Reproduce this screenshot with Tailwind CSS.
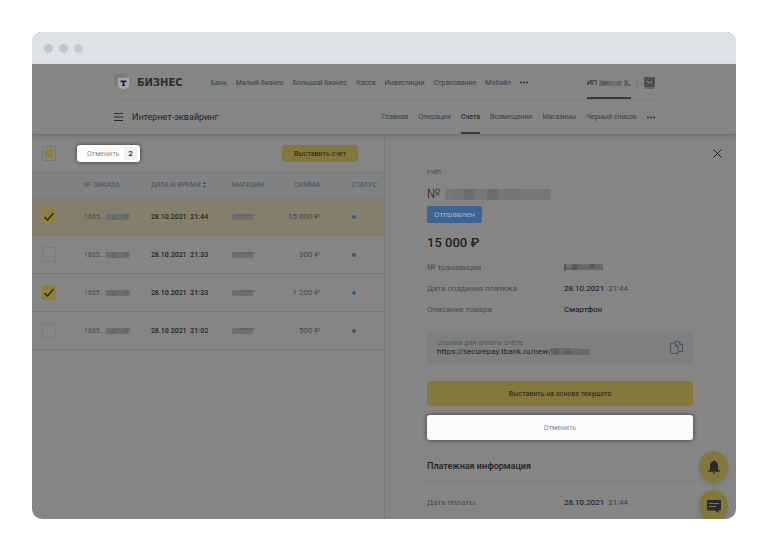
<!DOCTYPE html>
<html lang="ru">
<head>
  <meta charset="UTF-8" />
  <meta name="viewport" content="width=device-width, initial-scale=1" />
  <title>Интернет-эквайринг</title>
  <script src="https://cdn.jsdelivr.net/npm/@tailwindcss/browser@4"></script>
</head>
<body class="bg-white p-8 font-['Roboto','Liberation_Sans',sans-serif] text-[8px] leading-[12px] text-[#222]">
  <div class="relative overflow-hidden rounded-[10px] bg-[#858585]">

    <!-- browser bar -->
    <div class="flex h-8 items-center gap-[6px] bg-[#dee1e6] pl-3">
      <span class="size-[9px] rounded-full bg-[#c5c8d4]"></span>
      <span class="size-[9px] rounded-full bg-[#c5c8d4]"></span>
      <span class="size-[9px] rounded-full bg-[#c5c8d4]"></span>
    </div>

    <header class="border-b border-[#727272] pr-[81px] pl-[82px] shadow-[0_2px_5px_rgba(0,0,0,0.12)]">
      <div class="flex h-9 items-center border-b border-[#7d7d7d] pt-[2px]">
        <a href="#" class="flex items-center gap-1">
          <svg class="h-5 w-[19px]" viewBox="0 0 19 20">
            <rect width="19" height="20" rx="4" fill="#8a857a" />
            <path d="M4 0h11L0 15V4a4 4 0 0 1 4-4Z" fill="#827d74" />
            <path d="M4 5h11v6c0 3-2 4-5.500 5.500C6 15 4 14 4 11Z" fill="#a3a9b2" />
            <path d="M6.500 7.500h6v2h-1v-.5h-1v3h.5v1H8v-1h.5V9h-1v.5h-1Z" fill="#1f2126" />
          </svg>
          <span class="font-['DejaVu_Sans',sans-serif] text-[10px] font-bold text-[#2e2e2e]">БИЗНЕС</span>
        </a>
        <nav class="ml-7 flex items-center gap-[9px] text-[7px] text-[#3f3f3f]">
          <a href="#">Банк</a>
          <a href="#">Малый бизнес</a>
          <a href="#">Большой бизнес</a>
          <a href="#">Касса</a>
          <a href="#">Инвестиции</a>
          <a href="#">Страхование</a>
          <a href="#">Мобайл</a>
          <button type="button" aria-label="Ещё">
            <svg class="h-[3px] w-2" viewBox="0 0 8 3" fill="#2e2e2e"><circle cx="1" cy="1.500" r=".9" /><circle cx="4" cy="1.500" r=".9" /><circle cx="7" cy="1.500" r=".9" /></svg>
          </button>
        </nav>
        <div class="ml-auto flex h-full items-center">
          <a href="#" class="flex h-full items-center gap-[2px] border-y-2 border-t-transparent border-b-[#3a3a3a] text-[7px]">
            ИП
            <svg class="h-[6px] w-8" viewBox="0 0 34 6"><path d="M0 0h4v1h20v5H0Z" fill="#686868" /><path d="M4 1h5v4H4Z" fill="#5c5c5c" /><path d="M14 1h5v4h-5Z" fill="#727272" /><path d="M27 0h4v4h3v2h-7Z" fill="#5f5f5f" /></svg>
          </a>
          <span class="ml-[6px] h-3 w-px bg-[#797979]"></span>
          <button type="button" aria-label="Профиль" class="ml-[6px]">
            <svg class="h-3 w-[11px]" viewBox="0 0 11 12"><rect x="1" y="1" width="9" height="11" rx="1" fill="#63666a" /><rect width="11" height="10" rx="1" fill="#4c5055" /><path d="m3 4 2.500 2.500L8 4" fill="none" stroke="#9b9b9b" /></svg>
          </button>
        </div>
      </div>

      <div class="flex h-[34px] items-center">
        <button type="button" aria-label="Меню">
          <svg class="h-2 w-[9px]" viewBox="0 0 9 8" stroke="#2a2a2a"><path d="M0 .5h9M0 4h9M0 7.500h9" /></svg>
        </button>
        <h1 class="ml-[9px] text-[9px]">Интернет-эквайринг</h1>
        <nav class="ml-auto flex h-full items-center gap-[10px] text-[7px] text-[#3f3f3f]">
          <a href="#">Главная</a>
          <a href="#">Операции</a>
          <a href="#" class="flex h-full items-center border-y-2 border-t-transparent border-b-[#3a3a3a] text-[#111]">Счета</a>
          <a href="#">Возмещения</a>
          <a href="#">Магазины</a>
          <a href="#">Черный список</a>
          <button type="button" aria-label="Ещё">
            <svg class="h-[3px] w-2" viewBox="0 0 8 3" fill="#2e2e2e"><circle cx="1" cy="1.500" r=".9" /><circle cx="4" cy="1.500" r=".9" /><circle cx="7" cy="1.500" r=".9" /></svg>
          </button>
        </nav>
      </div>
    </header>

    <main class="grid grid-cols-2">
      <!-- invoices -->
      <section>
        <div class="flex h-[37px] items-center pr-[26px] pl-[10px]">
          <label class="relative block h-[15px] w-[14px]">
            <input type="checkbox" aria-label="Выбрать все" class="block h-full w-full appearance-none rounded-[2px] border border-[#747679]" />
            <span class="pointer-events-none absolute inset-[3px] bg-[#8f7f38]"></span>
          </label>
          <button type="button" class="ml-[21px] flex h-[17px] items-center gap-[5px] rounded-[3px] bg-white pr-[3px] pl-[10px] text-[7px] text-[#85888c] shadow-[0_0_4px_rgba(0,0,0,0.6)]">
            Отменить
            <span class="h-[13px] rounded-[2px] bg-[#eff0f3] px-1 text-[8px] leading-[13px] font-medium text-[#222]">2</span>
          </button>
          <button type="button" class="ml-auto h-[17px] rounded-[3px] bg-[#84773c] px-3 text-[7px]">Выставить счет</button>
        </div>

        <table class="w-full table-fixed text-left">
          <thead>
            <tr class="h-[25px] border-y border-[#797979] bg-[#808182] text-[7px] text-[#4d525c]">
              <th class="w-[52px]"></th>
              <th class="w-[19%] font-normal">№ ЗАКАЗА</th>
              <th class="w-[23%] font-normal whitespace-nowrap">ДАТА И ВРЕМЯ<svg class="ml-[2px] inline h-[6px] w-[3px]" viewBox="0 0 3 6" fill="#3c4452"><path d="M0 2 1.500 0 3 2ZM0 4l1.500 2L3 4Z" /></svg></th>
              <th class="w-[12%] font-normal">МАГАЗИН</th>
              <th class="w-[13%] text-right font-normal">СУММА</th>
              <th class="pr-[7px] text-right font-normal">СТАТУС</th>
            </tr>
          </thead>
          <tbody id="invoices"></tbody>
        </table>
      </section>

      <!-- invoice card -->
      <section class="relative border-l border-[#787878] pr-[43px] pb-[6px] pl-[42px]">
        <button type="button" aria-label="Закрыть" class="absolute top-[14px] right-[14px]">
          <svg class="size-[9px]" viewBox="0 0 9 9" stroke="#222"><path d="m.5.5 8 8m0-8-8 8" /></svg>
        </button>

        <p class="mt-[31px] text-[7px] text-[#4a4a4a]">счёт</p>
        <h2 class="mt-2 flex h-4 items-center gap-[5px] text-[13px] font-light">№
          <svg class="h-[11px] w-[106px]" viewBox="0 0 106 11"><path d="M0 0h106v11H0Z" fill="#767777" /><path d="M8 0h11v11H8Zm52 0h14v11H60Z" fill="#727373" /><path d="M19 0h11v11H19Zm23 0h11v11H42Z" fill="#6c6f6e" /></svg>
        </h2>
        <span class="mt-1 inline-block h-[17px] rounded-[2px] bg-[#3b6492] px-[7px] leading-[17px] text-[#a9b5c2]">Отправлен</span>
        <p class="mt-[10px] text-[13px] leading-5 font-medium">15 000 ₽</p>

        <dl class="mt-1 grid grid-cols-[137px_1fr] leading-[21px]">
          <dt class="text-[#4a4b4e]">№ транзакции</dt>
          <dd class="flex items-center"><svg class="h-[7px] w-[39px]" viewBox="0 0 39 7"><path d="M0 0h39v6H0Z" fill="#666768" /><path d="M0 0h2v7H0Zm8 1h5v5H8Zm18-1h5v4h-5Z" fill="#545658" /><path d="M2 0h6v3H2Zm16 0h5v2h-5Z" fill="#707070" /></svg></dd>
          <dt class="text-[#4a4b4e]">Дата создания платежа</dt>
          <dd class="text-[#111]">28.10.2021 <span class="ml-[2px] text-[#444]">21:44</span></dd>
          <dt class="text-[#4a4b4e]">Описание товара</dt>
          <dd class="text-[#111]">Смартфон</dd>
        </dl>

        <div class="mt-[11px] flex h-[33px] items-center justify-between rounded-[3px] bg-[#7f7f7f] px-[10px]">
          <div>
            <p class="text-[7px] leading-[7px] text-[#555]">Ссылка для оплаты счёта</p>
            <p class="flex items-center leading-[9px]"><a href="#">https://securepay.tbank.ru/new/</a><svg class="h-[7px] w-[38px]" viewBox="0 0 38 7"><path d="M0 0h28v1h10v6H0Z" fill="#68696b" /><path d="M2 1h5v5H2Zm12 1h6v4h-6Z" fill="#5c5f62" /><path d="M20 0h8v3h-8Z" fill="#707173" /></svg></p>
          </div>
          <button type="button" aria-label="Скопировать">
            <svg class="h-[13px] w-[13px]" viewBox="0 0 13 13" fill="none" stroke="#3f5267" stroke-width=".9"><path d="M5 2V.5h4.500l3 3V10.500H8.500M9.500.5v3h3" /><path d="M.5 2h4.500l3 3v7.500H.5ZM5 2v3h3" /></svg>
          </button>
        </div>

        <button type="button" class="mt-[17px] block h-[25px] w-full rounded-[3px] bg-[#84773c] text-[7px]">Выставить на основе текущего</button>
        <button type="button" class="mt-[9px] block h-[25px] w-full rounded-[3px] bg-[#fafbfd] text-[7px] text-[#85888c] shadow-[0_0_5px_rgba(0,0,0,0.6)]">Отменить</button>

        <h3 class="mt-5 border-b border-[#7b7b7b] pb-2 text-[9px] leading-[13px] font-medium">Платежная информация</h3>
        <dl class="mt-[10px] grid grid-cols-[137px_1fr] leading-[21px]">
          <dt class="text-[#4a4b4e]">Дата оплаты</dt>
          <dd class="text-[#111]">28.10.2021 <span class="ml-[2px] text-[#444]">21:44</span></dd>
        </dl>
      </section>
    </main>

    <!-- floating buttons, the lower one is cut by the window edge -->
    <div class="absolute right-2 -bottom-[3px] flex flex-col gap-[7px]">
      <button type="button" aria-label="Уведомления" class="flex h-8 w-[29px] items-center justify-center rounded-[50%] bg-[#84773c] shadow-[0_2px_5px_rgba(0,0,0,0.1)]">
        <svg class="h-[14px] w-3" viewBox="0 0 12 14" fill="#2b2b2e"><path d="M5 1.200a1 1 0 0 1 2 0C9 1.700 10 3.500 10 5.500v4l2 1.500v.8H0V11l2-1.500v-4c0-2 1-3.800 3-4.300ZM4.700 12.500h2.600c0 .9-.5 1.500-1.300 1.500s-1.300-.6-1.300-1.500Z" /></svg>
      </button>
      <button type="button" aria-label="Чат" class="flex h-8 w-[29px] items-center justify-center rounded-[50%] bg-[#84773c] shadow-[0_2px_5px_rgba(0,0,0,0.1)]">
        <svg class="h-[13px] w-[14px]" viewBox="0 0 14 13"><path d="M1 0h12a1 1 0 0 1 1 1v8.500a1 1 0 0 1-1 1h-1.500V13L8 10.500H1a1 1 0 0 1-1-1V1a1 1 0 0 1 1-1Z" fill="#2b2b2e" /><path d="M2 3.500h10M2 6.500h7" stroke="#84773c" stroke-width="1.200" /></svg>
      </button>
    </div>
  </div>

  <script>
    const invoices = [
      { time: '21:44', sum: '15 000', checked: true, active: true, dot: 'bg-[#37608f]' },
      { time: '21:33', sum: '300', checked: false, active: false, dot: 'bg-[#55523f]' },
      { time: '21:33', sum: '1 200', checked: true, active: false, dot: 'bg-[#37608f]' },
      { time: '21:02', sum: '500', checked: false, active: false, dot: 'bg-[#55523f]' }
    ];

    document.getElementById('invoices').innerHTML = invoices.map((item) =>
      '<tr class="h-[38px] border-b border-[#797979] ' + (item.active ? 'bg-[#827f6c]' : '') + '">' +
        '<td class="pl-[10px]"><label class="relative block h-[15px] w-[14px]">' +
          '<input type="checkbox" aria-label="Выбрать счёт" class="block h-full w-full appearance-none rounded-[2px] border border-[#7a7b7d] checked:border-[#8f7f38] checked:bg-[#8f7f38]"' + (item.checked ? ' checked' : '') + ' />' +
          (item.checked ? '<svg class="pointer-events-none absolute top-[3px] left-[2px] h-[9px] w-[10px]" viewBox="0 0 10 9" fill="none" stroke="#24242c" stroke-width="1.300"><path d="m.5 5 3 3 6-7" /></svg>' : '') +
        '</label></td>' +
        '<td class="text-[7px] text-[#484848]"><span class="flex items-center gap-px">1635...<svg class="h-[6px] w-6" viewBox="0 0 24 6"><path d="M0 0h24v4h-1v2H0Z" fill="#6c6f70" /><path d="M6 1h5v5H6Zm12-1h4v4h-4Z" fill="#646869" /></svg></span></td>' +
        '<td class="text-[7px] font-medium whitespace-nowrap">28.10.2021 <span class="ml-[2px]">' + item.time + '</span></td>' +
        '<td><svg class="h-[6px] w-[23px]" viewBox="0 0 23 6"><path d="M0 0h23v2h-2v4H0Z" fill="#6d7070" /><path d="M6 0h14v2H6Z" fill="#656767" /></svg></td>' +
        '<td class="text-right text-[#4a4a4a] whitespace-nowrap">' + item.sum + ' ₽</td>' +
        '<td class="pl-8"><span class="block size-[4px] rounded-full ' + item.dot + '"></span></td>' +
      '</tr>'
    ).join('');
  </script>
</body>
</html>
